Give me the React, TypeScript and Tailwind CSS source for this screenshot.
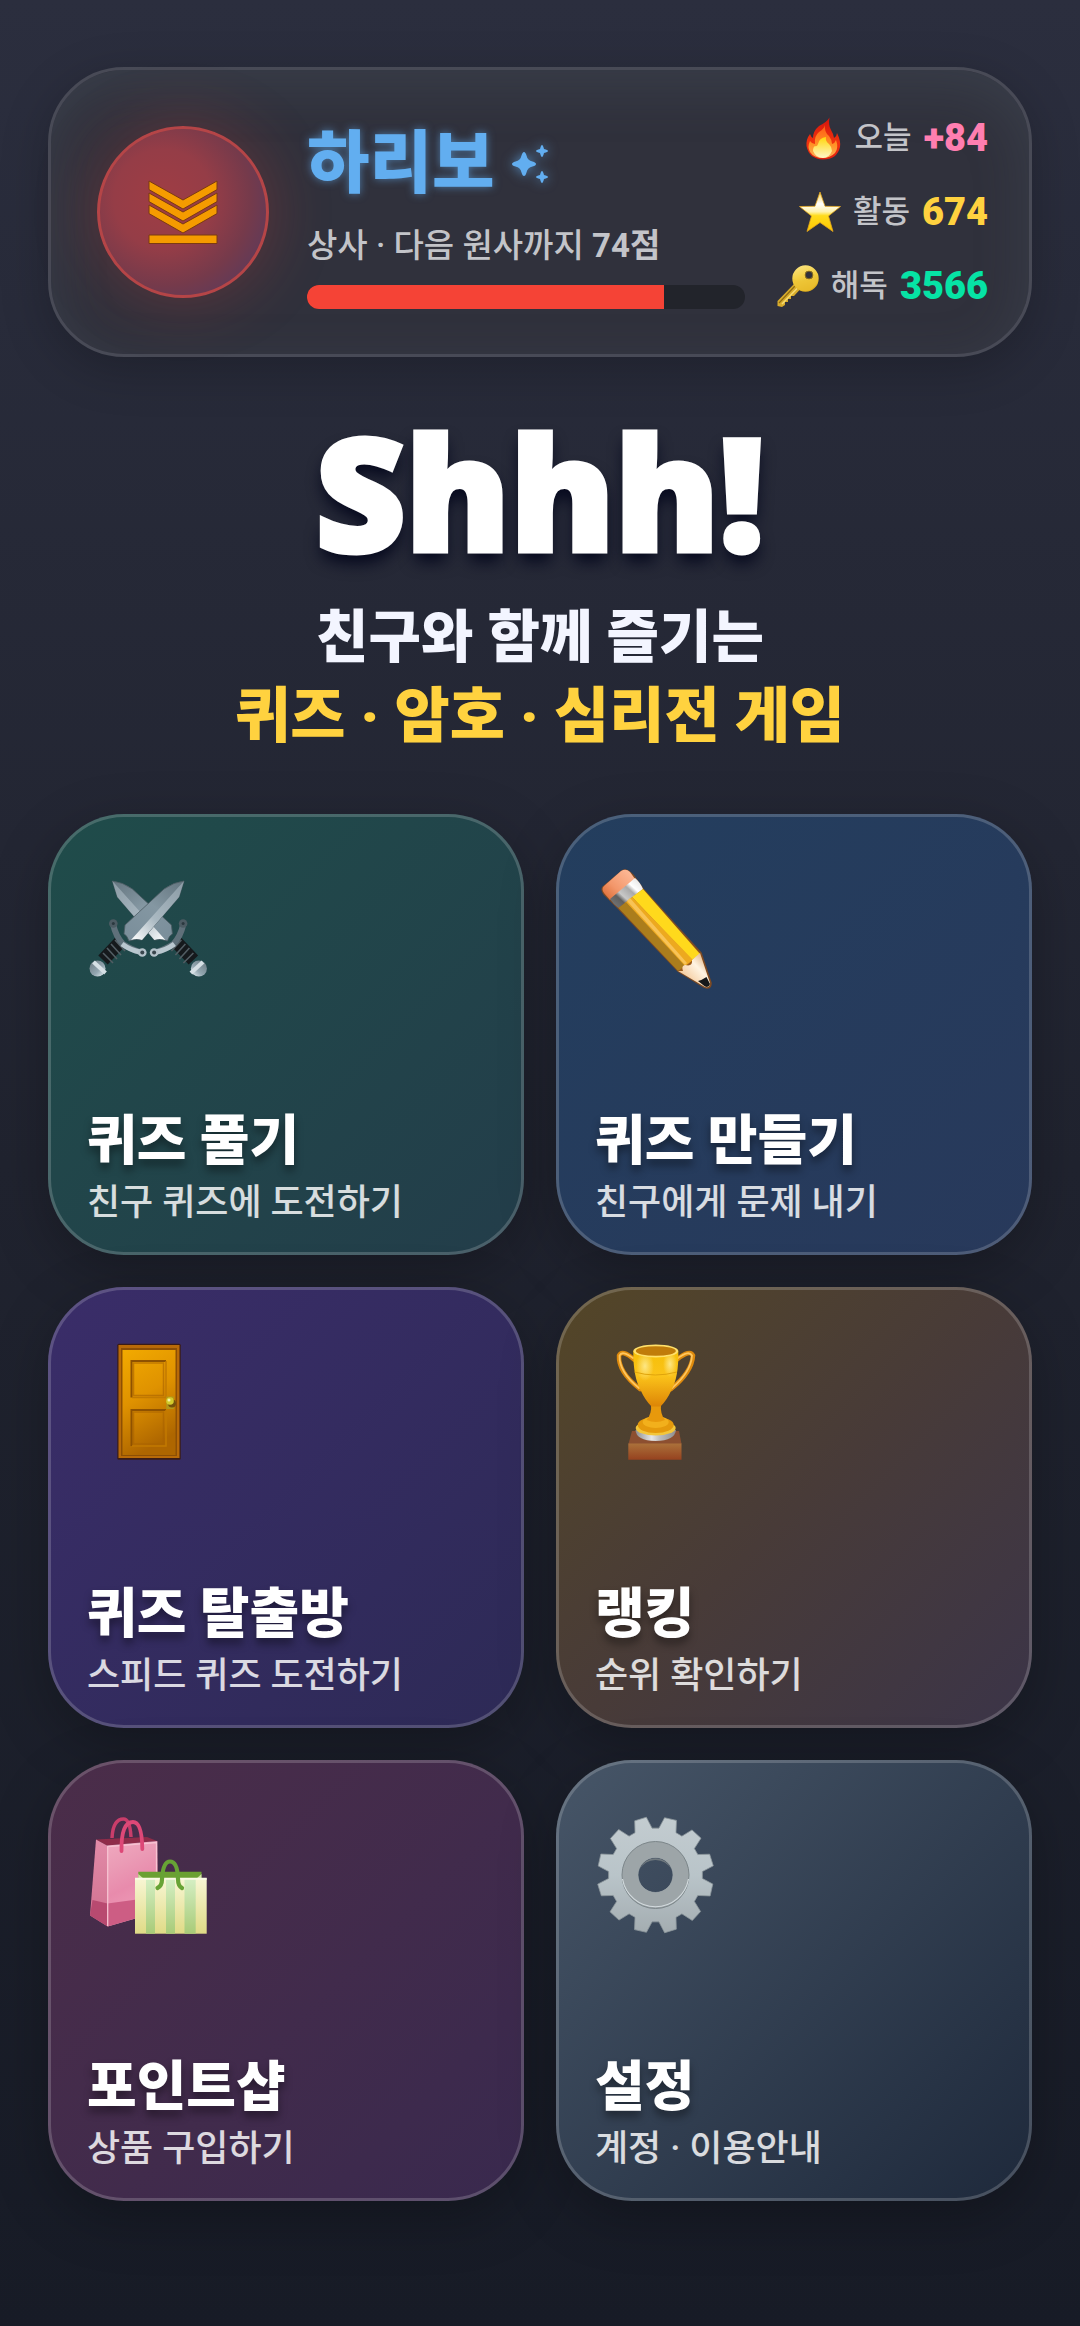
import type { ComponentType, ReactNode } from 'react'

type StatProps = {
  icon: ReactNode
  label: string
  value: string
  valueClass: string
}

type Menu = {
  title: string
  description: string
  background: string
  Icon: ComponentType
}

const RANK_SCORE = 326
const RANK_TARGET = 400

function RankBadge() {
  const bands = [0, 12, 24]

  return (
    <div className="mr-[38px] flex size-43 shrink-0 items-center justify-center rounded-full border-3 border-[#b54547] bg-[radial-gradient(circle_at_38%_42%,#9f3d44_0%,#953d47_35%,#753a4b_62%,#573a5e_88%)] shadow-[0_0_64px_rgba(244,67,54,0.26)]">
      <svg viewBox="-1 -1 70 65" className="w-[70px]" aria-hidden="true">
        <g fill="#f59b00" stroke="#7b3a12" strokeWidth="1">
          {bands.map((y) => (
            <path
              key={y}
              d={`M0 ${y}L34 ${y + 19}L68 ${y}V${y + 8.6}L34 ${y + 28}L0 ${y + 8.6}Z`}
            />
          ))}
          <path d="M0 54H68V62.5H0Z" />
        </g>
      </svg>
    </div>
  )
}

function Sparkles() {
  return (
    <svg
      viewBox="0 0 40 42"
      className="w-10 drop-shadow-[0_0_6px_rgba(98,174,240,0.7)]"
      fill="#62aef0"
      aria-hidden="true"
    >
      <path d="M13 9Q14.500 9 15.500 12.500Q16.500 17.500 21.500 18.500Q25 19.500 25 21Q25 22.500 21.500 23.500Q16.500 24.500 15.500 29.500Q14.500 33 13 33Q11.500 33 10.500 29.500Q9.500 24.500 4.500 23.500Q1 22.500 1 21Q1 19.500 4.500 18.500Q9.500 17.500 10.500 12.500Q11.500 9 13 9Z" />
      <path d="M31 2Q32 2 33 6Q37 7 37 8Q37 9 33 10Q32 14 31 14Q30 14 29 10Q25 9 25 8Q25 7 29 6Q30 2 31 2Z" />
      <path d="M31 28Q32 28 33 32Q37 33 37 34Q37 35 33 36Q32 40 31 40Q30 40 29 36Q25 35 25 34Q25 33 29 32Q30 28 31 28Z" />
    </svg>
  )
}

function FireIcon() {
  return (
    <svg viewBox="0 0 42 44" className="w-[42px]" aria-hidden="true">
      <defs>
        <linearGradient id="fire-outer" x1="0" y1="0" x2="0" y2="1">
          <stop offset="0" stopColor="#d3150c" />
          <stop offset="0.6" stopColor="#f0330f" />
          <stop offset="1" stopColor="#e0200f" />
        </linearGradient>
        <linearGradient id="fire-mid" x1="0" y1="0" x2="0" y2="1">
          <stop offset="0" stopColor="#ff5a14" />
          <stop offset="0.6" stopColor="#ff9226" />
          <stop offset="1" stopColor="#ffb057" />
        </linearGradient>
        <linearGradient id="fire-core" x1="0" y1="0" x2="0" y2="1">
          <stop offset="0" stopColor="#ffd60a" />
          <stop offset="1" stopColor="#fff6c8" />
        </linearGradient>
      </defs>
      <path
        d="M28.500 1.500Q27 9 30 14Q32.500 18 33 22Q36 20 36 17Q40 25 39 31Q36 43.500 22 43.500Q8 43 5.500 30Q5 23 9 18Q10 21 12 22Q12 15 18 10Q26 6 28.500 1.500Z"
        fill="url(#fire-outer)"
      />
      <path
        d="M24 9Q23 16 28 20Q31 24 31 28Q34 27 35 24Q38 32 34 37Q29 42 22 42Q13 42 9 36Q6 31 9 25Q11 28 14 28Q13 20 18 16Q23 13 24 9Z"
        fill="url(#fire-mid)"
      />
      <path
        d="M25 21Q24 25 28 28Q31 31 31 35Q28 42 22 42Q15 42 12 35Q12 31 14 30Q16 31 17 28Q18 22 25 21Z"
        fill="url(#fire-core)"
      />
    </svg>
  )
}

function StarIcon() {
  return (
    <svg viewBox="0 0 42 42" className="w-[42px]" aria-hidden="true">
      <defs>
        <linearGradient id="star-fill" x1="0" y1="0" x2="0" y2="1">
          <stop offset="0" stopColor="#f7d458" />
          <stop offset="0.300" stopColor="#ffffff" />
          <stop offset="0.500" stopColor="#fff3ad" />
          <stop offset="0.600" stopColor="#ffdc1c" />
          <stop offset="1" stopColor="#fdc500" />
        </linearGradient>
      </defs>
      <path
        d="M21 1L26 15.300L41.500 15.500L29.500 25L34 40.500L21 31.500L8 40.500L12.500 25L0.500 15.500L16 15.300Z"
        fill="url(#star-fill)"
        stroke="#e2a41c"
        strokeWidth="0.800"
      />
    </svg>
  )
}

function KeyIcon() {
  return (
    <svg viewBox="0 0 42 42" className="w-[42px]" aria-hidden="true">
      <defs>
        <linearGradient id="key-fill" x1="0" y1="0" x2="0.300" y2="1">
          <stop offset="0" stopColor="#fbe68a" />
          <stop offset="0.500" stopColor="#f3d044" />
          <stop offset="1" stopColor="#dfae1d" />
        </linearGradient>
      </defs>
      <path
        d="M17 19L0.500 36L0.500 41L5 42L8 40L8 37L11 37L11 34L14 34L14 31L17 31L23 24.500Z"
        fill="#d8ac2c"
      />
      <path d="M18 21L2 38" stroke="#8e6a12" strokeWidth="1.200" />
      <path d="M20.500 23L5 39" stroke="#f6dc72" strokeWidth="1.500" />
      <path
        fillRule="evenodd"
        d="M28.500 0.300A13.200 13.200 0 1 1 28.500 26.700A13.200 13.200 0 1 1 28.500 0.300ZM32 6A4 4 0 1 0 32 14A4 4 0 1 0 32 6Z"
        fill="url(#key-fill)"
      />
      <path d="M16 14Q24 19 41 12Q41 18 37 22Q31 28 23 25Q16 21 16 14Z" fill="#eec436" opacity="0.600" />
      <circle cx="32" cy="10" r="3.900" fill="#30313c" stroke="#9c7a18" strokeWidth="0.900" />
    </svg>
  )
}

function SwordShape() {
  return (
    <g>
      <path d="M34 72L16 91" stroke="#15191c" strokeWidth="13" />
      <path
        d="M28 71L38 82M24 75L34 86M20 79L30 90M16 84L26 94"
        stroke="#525d63"
        strokeWidth="1.600"
      />
      <circle cx="10.500" cy="99.500" r="8" fill="url(#sword-pommel)" />
      <path d="M6.500 93L18.500 104" stroke="#d6e0e5" strokeWidth="4" />
      <path
        d="M97 12L92 28L55 71Q48 69 42 72Q40 66 37 65L38 56L77 20Q87 13 97 12Z"
        fill="url(#sword-dark)"
        stroke="#4d5c63"
        strokeWidth="0.800"
      />
      <path d="M97 12L92 28L55 71Q50 69 44 71Z" fill="url(#sword-light)" />
      <path
        d="M26 55Q29 68 36 75Q45 81 55 83.500"
        fill="none"
        stroke="#5f707a"
        strokeWidth="6"
        strokeLinecap="round"
      />
      <path d="M35 75Q43 81 53 83" fill="none" stroke="#b9c7cf" strokeWidth="5" />
      <circle cx="26.300" cy="54.500" r="4.300" fill="#4c5b63" />
      <circle cx="26.300" cy="54.500" r="1.500" fill="#2b383f" />
      <circle cx="55.300" cy="83.500" r="4.300" fill="#b4c2ca" />
      <circle cx="55.300" cy="83.500" r="2" fill="#39464d" />
    </g>
  )
}

function SwordsIcon() {
  return (
    <svg viewBox="0 0 120 120" className="w-30 overflow-visible" aria-hidden="true">
      <defs>
        <linearGradient id="sword-dark" x1="1" y1="0" x2="0.200" y2="1">
          <stop offset="0" stopColor="#64757f" />
          <stop offset="0.500" stopColor="#8497a2" />
          <stop offset="1" stopColor="#7b8f9b" />
        </linearGradient>
        <linearGradient id="sword-light" x1="1" y1="0" x2="0" y2="1">
          <stop offset="0" stopColor="#8b9ba5" />
          <stop offset="0.600" stopColor="#a9b8c1" />
          <stop offset="1" stopColor="#ffffff" />
        </linearGradient>
        <linearGradient id="sword-pommel" x1="0" y1="0" x2="1" y2="1">
          <stop offset="0" stopColor="#68777f" />
          <stop offset="0.600" stopColor="#94a7b1" />
          <stop offset="1" stopColor="#eef5f8" />
        </linearGradient>
      </defs>
      <g transform="translate(122.400 0) scale(-1 1)">
        <SwordShape />
      </g>
      <SwordShape />
    </svg>
  )
}

function PencilIcon() {
  return (
    <svg viewBox="0 0 120 120" className="w-30 overflow-visible" aria-hidden="true">
      <defs>
        <linearGradient id="pencil-eraser" x1="0" y1="1" x2="1" y2="0">
          <stop offset="0" stopColor="#d9652c" />
          <stop offset="0.400" stopColor="#f3976b" />
          <stop offset="1" stopColor="#ffc0a0" />
        </linearGradient>
        <linearGradient id="pencil-metal" x1="0" y1="1" x2="1" y2="0">
          <stop offset="0" stopColor="#7d7d7d" />
          <stop offset="0.300" stopColor="#5f5f5f" />
          <stop offset="0.400" stopColor="#c8c8c8" />
          <stop offset="0.600" stopColor="#a9a9a9" />
          <stop offset="0.700" stopColor="#ffffff" />
          <stop offset="1" stopColor="#dcdcdc" />
        </linearGradient>
        <linearGradient id="pencil-wood" x1="0" y1="1" x2="1" y2="0">
          <stop offset="0" stopColor="#eeb070" />
          <stop offset="0.600" stopColor="#fff4e2" />
          <stop offset="1" stopColor="#d69a5c" />
        </linearGradient>
      </defs>
      <path
        d="M8 18Q6 21 9 25L23 39L83 102L109 118Q116 121 116 114L106 84L48 20L38 6Q31 -1 27 2Z"
        fill="#9a5a1c"
        stroke="#7c4a24"
        strokeWidth="1.500"
        strokeLinejoin="round"
      />
      <path d="M9 17Q6 20 9 24L15 31L40 10L35 3Q31 -1 26 2Z" fill="url(#pencil-eraser)" />
      <path d="M15 30L40 9Q45 13 48 20L23.500 39Q18 35 15 30Z" fill="url(#pencil-metal)" />
      <path d="M48 20L37 28L97 91L105 85Z" fill="#ffd91c" />
      <path d="M37 28L30 34L89 98L98 91Z" fill="#eda91f" />
      <path d="M35 29L32 32L90 96L92 94Z" fill="#f8c356" />
      <path d="M31 33L23.500 39L83 102L90 97Z" fill="#ab7d1c" />
      <path
        d="M105 84L97 91Q98 98 90 96Q86 97 88 102L83 102L110 118Q115 119 115 114Z"
        fill="url(#pencil-wood)"
      />
      <path d="M103 112Q107 111 111.500 108L115 115Q114 119 110 117.500Z" fill="#16181a" />
    </svg>
  )
}

function DoorIcon() {
  return (
    <svg viewBox="0 0 120 120" className="w-30" aria-hidden="true">
      <defs>
        <linearGradient id="door-fill" x1="0" y1="0" x2="0.300" y2="1">
          <stop offset="0" stopColor="#f2aa00" />
          <stop offset="0.500" stopColor="#df9200" />
          <stop offset="1" stopColor="#ae6600" />
        </linearGradient>
      </defs>
      <rect x="30.300" y="1.700" width="63.400" height="116" rx="1.500" fill="#3c1c14" />
      <rect x="31.500" y="3" width="61" height="113" fill="#b86a08" />
      <rect x="34" y="6" width="56" height="108" fill="#8d4f04" />
      <rect x="35.500" y="8" width="53" height="105" fill="url(#door-fill)" />
      <g fill="none" stroke="#a86200" strokeWidth="1.500">
        <path d="M44.500 55.500V19H79" stroke="#8f5200" strokeWidth="2" />
        <path d="M44.500 104V68H79" stroke="#8f5200" strokeWidth="2" />
        <rect x="46.500" y="21" width="30" height="32.500" opacity="0.600" />
        <rect x="46.500" y="70" width="30" height="32" opacity="0.600" />
        <path d="M79 19V55.500H45M79 68V104H45" stroke="#c27a00" />
      </g>
      <rect x="79.300" y="54.500" width="7.500" height="12.500" fill="#b39818" />
      <circle cx="85" cy="61.500" r="4" fill="#75510a" />
      <circle cx="83" cy="59" r="3.800" fill="#d3cb2c" />
      <circle cx="82" cy="58" r="1.500" fill="#f7f4a8" />
    </svg>
  )
}

function TrophyIcon() {
  return (
    <svg viewBox="0 0 120 120" className="w-30" aria-hidden="true">
      <defs>
        <linearGradient id="trophy-cup" x1="0" y1="0" x2="0" y2="1">
          <stop offset="0" stopColor="#f5bf08" />
          <stop offset="0.450" stopColor="#fbc31a" />
          <stop offset="1" stopColor="#dd8506" />
        </linearGradient>
        <linearGradient id="trophy-wood" x1="0" y1="0" x2="0" y2="1">
          <stop offset="0" stopColor="#ab713a" />
          <stop offset="1" stopColor="#96421f" />
        </linearGradient>
        <radialGradient id="trophy-shine">
          <stop offset="0" stopColor="#fff0a0" />
          <stop offset="1" stopColor="#fff0a0" stopOpacity="0" />
        </radialGradient>
        <linearGradient id="trophy-ring" x1="0" y1="0" x2="1" y2="0">
          <stop offset="0" stopColor="#8e8e8e" />
          <stop offset="0.400" stopColor="#e6e6e6" />
          <stop offset="0.600" stopColor="#bdbdbd" />
          <stop offset="1" stopColor="#8e8e8e" />
        </linearGradient>
      </defs>
      <path d="M37 89H84L86.500 102H33.500Z" fill="#8c4f30" />
      <path d="M33.300 101.500H86.500V117.700H33.300Z" fill="url(#trophy-wood)" />
      <path d="M40.500 88Q41 98.500 60.700 99Q80 98.500 81 88Z" fill="url(#trophy-ring)" />
      <ellipse cx="60.700" cy="86" rx="20" ry="7.500" fill="#f3c63a" />
      <ellipse cx="60.700" cy="83" rx="18" ry="8" fill="#e59a0c" />
      <ellipse cx="60.700" cy="80" rx="13" ry="6" fill="#f2b01c" />
      <path d="M56 62H66Q65 72 70 78Q61 82 51.500 78Q57 72 56 62Z" fill="#e8990c" />
      <g fill="none" strokeLinecap="round">
        <path
          d="M39 17.500Q27 7 24 13.500Q23 30 45 47M82 17.500Q95 7 98 13.500Q97 30 76 47"
          stroke="#de8a0d"
          strokeWidth="4.500"
        />
        <path
          d="M38 16Q27 8 24.500 13.500Q24 30 44 46M83 16Q94 8 97 13.500Q96 30 77 46"
          stroke="#ffc65e"
          strokeWidth="1.800"
        />
      </g>
      <path
        d="M38.300 9Q38 35 46 49Q50 58 56.500 64.500H65.500Q72 58 76 49Q84 35 83.300 9Z"
        fill="url(#trophy-cup)"
      />
      <ellipse cx="50" cy="24" rx="9" ry="15" fill="url(#trophy-shine)" opacity="0.800" />
      <ellipse cx="75" cy="22" rx="7" ry="13" fill="url(#trophy-shine)" opacity="0.800" />
      <path d="M39.500 30Q60 36 82 30" fill="none" stroke="#e0a40c" strokeWidth="1" />
      <ellipse cx="60.800" cy="9" rx="22.500" ry="6.500" fill="#ffe06a" />
      <ellipse cx="60.800" cy="9" rx="20" ry="4.800" fill="#c07c0a" />
    </svg>
  )
}

function BagsIcon() {
  return (
    <svg viewBox="0 0 120 120" className="w-30" aria-hidden="true">
      <defs>
        <linearGradient id="bag-front" x1="0" y1="0" x2="0.300" y2="1">
          <stop offset="0" stopColor="#f0a9bf" />
          <stop offset="0.300" stopColor="#eb9cb6" />
          <stop offset="0.600" stopColor="#e88bac" />
          <stop offset="1" stopColor="#ef9fba" />
        </linearGradient>
        <linearGradient id="bag-side" x1="0" y1="0" x2="0" y2="1">
          <stop offset="0" stopColor="#e28ba8" />
          <stop offset="1" stopColor="#d0708f" />
        </linearGradient>
        <linearGradient id="bag-cream" x1="0" y1="0" x2="0" y2="1">
          <stop offset="0" stopColor="#f8f6d4" />
          <stop offset="1" stopColor="#dfdb86" />
        </linearGradient>
        <linearGradient id="bag-stripe" x1="0" y1="0" x2="0" y2="1">
          <stop offset="0" stopColor="#d5efc4" />
          <stop offset="1" stopColor="#a8cb78" />
        </linearGradient>
      </defs>
      <path
        d="M25 23Q26 4 36.500 4Q43 4 44 22"
        fill="none"
        stroke="#c93d6a"
        strokeWidth="3.500"
      />
      <path d="M9 24.500L20 30.500L70 26L60 22Z" fill="#8f2c49" />
      <path d="M9 24.500L20 30.500L20.700 111.500L3 100.500Z" fill="url(#bag-side)" />
      <path d="M5.500 85L20.500 88.500L20.700 111.500L3 100.500Z" fill="#b84a70" />
      <path d="M20 30.500L70.300 26L71 97L20.700 111.500Z" fill="url(#bag-front)" />
      <path d="M20.500 88.500L50 84.500V103L20.700 111.500Z" fill="#cd5d84" />
      <path d="M20.700 111V31.500L69.500 27.500V58" fill="none" stroke="#f7c3d2" strokeWidth="1.300" />
      <path
        d="M34.500 36Q34 7 46 7Q55 7 55.300 34"
        fill="none"
        stroke="#dd4877"
        strokeWidth="3.800"
        strokeLinecap="round"
      />
      <path d="M51.300 56.700H114.500V64H51.300Z" fill="#6ba032" />
      <path d="M51.300 59L57 64H51.300ZM114.500 59L109 64H114.500Z" fill="#cfe0a4" />
      <rect x="48" y="63.300" width="71.700" height="55.400" fill="url(#bag-cream)" />
      <path
        d="M59 63.300H68V118.700H59ZM79 63.300H88V118.700H79ZM97.500 63.300H108.700V118.700H97.500Z"
        fill="url(#bag-stripe)"
      />
      <path d="M48 63.800H119.700" stroke="#fbfae6" strokeWidth="2" />
      <path
        d="M70.500 73Q75 71 75 64Q76 46.500 83 46.500Q90.500 46.500 91 64Q91 71 95 73"
        fill="none"
        stroke="#67a335"
        strokeWidth="4.200"
        strokeLinecap="round"
      />
    </svg>
  )
}

const GEAR_TEETH = 12

function gearPath() {
  const point = (radius: number, degrees: number) => {
    const angle = (degrees * Math.PI) / 180
    const x = 60.5 + radius * Math.sin(angle)
    const y = 60 - radius * Math.cos(angle)
    return `${x.toFixed(2)} ${y.toFixed(2)}`
  }

  const points: string[] = []
  for (let i = 0; i < GEAR_TEETH; i++) {
    const middle = 15 + (i * 360) / GEAR_TEETH
    points.push(
      point(47, middle - 10.8),
      point(58, middle - 6),
      point(58.5, middle + 6),
      point(47, middle + 10.8)
    )
  }
  return `M${points.join('L')}ZM60.5 42.5a17.5 17.5 0 1 0 0 35a17.5 17.5 0 1 0 0-35Z`
}

function GearIcon() {
  return (
    <svg viewBox="0 0 120 120" className="w-30" aria-hidden="true">
      <defs>
        <linearGradient id="gear-fill" x1="0" y1="0" x2="0" y2="1">
          <stop offset="0" stopColor="#c3ccd0" />
          <stop offset="0.500" stopColor="#b9c4c9" />
          <stop offset="1" stopColor="#a4adb1" />
        </linearGradient>
      </defs>
      <path
        d={gearPath()}
        fillRule="evenodd"
        fill="url(#gear-fill)"
        stroke="#8d979c"
        strokeWidth="0.800"
        strokeLinejoin="round"
      />
      <circle cx="60.500" cy="60" r="25.500" fill="none" stroke="#9da5a8" strokeWidth="16" />
      <circle cx="60.500" cy="60" r="33.500" fill="none" stroke="#7c868a" strokeWidth="1" />
      <path d="M27.500 64A33.500 33.500 0 0 0 93.500 64" fill="none" stroke="#d3dbde" strokeWidth="1.200" />
      <path d="M44 55A17.500 17.500 0 0 1 77 55Q71 45 60.500 45Q50 45 44 55Z" fill="#6f787e" />
    </svg>
  )
}

const menus: Menu[] = [
  {
    title: '퀴즈 풀기',
    description: '친구 퀴즈에 도전하기',
    background: 'from-[#1f4c4a] to-[#233d4a]',
    Icon: SwordsIcon,
  },
  {
    title: '퀴즈 만들기',
    description: '친구에게 문제 내기',
    background: 'from-[#233e5e] to-[#28395b]',
    Icon: PencilIcon,
  },
  {
    title: '퀴즈 탈출방',
    description: '스피드 퀴즈 도전하기',
    background: 'from-[#3a2d69] to-[#2d2a56]',
    Icon: DoorIcon,
  },
  {
    title: '랭킹',
    description: '순위 확인하기',
    background: 'from-[#544626] via-[#483b38] to-[#3b3448]',
    Icon: TrophyIcon,
  },
  {
    title: '포인트샵',
    description: '상품 구입하기',
    background: 'from-[#4b2d49] to-[#39294e]',
    Icon: BagsIcon,
  },
  {
    title: '설정',
    description: '계정 · 이용안내',
    background: 'from-[#475668] to-[#1e293b]',
    Icon: GearIcon,
  },
]

function Stat({ icon, label, value, valueClass }: StatProps) {
  return (
    <li className="flex h-11 items-center justify-end gap-3">
      {icon}
      <span className="text-[31px] font-medium text-[#c3c4c9]">{label}</span>
      <strong className={`text-[38px] font-black ${valueClass}`}>{value}</strong>
    </li>
  )
}

function ProfileCard() {
  const percent = (RANK_SCORE / RANK_TARGET) * 100

  return (
    <header className="flex items-center rounded-[76px] border-3 border-[#484a56] bg-[#30313c] py-[45px] pr-[41px] pl-[46px] shadow-[0_12px_48px_rgba(0,0,0,0.22),inset_0_16px_56px_rgba(90,110,125,0.22)]">
      <RankBadge />
      <div className="flex min-w-0 flex-1 flex-col gap-4 pt-1.5">
        <div className="flex items-center gap-4 text-[68px] leading-[86px] font-black text-[#62aef0]">
          <span className="[text-shadow:0_0_8px_rgba(98,174,240,0.6)]">하리보</span>
          <Sparkles />
        </div>
        <p className="text-[33px] leading-[46px] font-medium whitespace-nowrap text-[#c3c4c9]">
          상사 · 다음 원사까지 <strong className="font-bold">74점</strong>
        </p>
        <div
          role="progressbar"
          aria-label="다음 계급까지"
          aria-valuenow={RANK_SCORE}
          aria-valuemax={RANK_TARGET}
          className="h-6 overflow-hidden rounded-full bg-[#22242b]"
        >
          <div className="h-full bg-[#f54336]" style={{ width: `${percent}%` }} />
        </div>
      </div>
      <ul className="ml-8 flex shrink-0 flex-col gap-[30px]">
        <Stat icon={<FireIcon />} label="오늘" value="+84" valueClass="text-[#ff7eb0]" />
        <Stat icon={<StarIcon />} label="활동" value="674" valueClass="text-[#ffd23f]" />
        <Stat icon={<KeyIcon />} label="해독" value="3566" valueClass="text-[#06e3a5]" />
      </ul>
    </header>
  )
}

function MenuCard({ title, description, background, Icon }: Menu) {
  return (
    <button
      type="button"
      className={`flex h-[441px] flex-col items-start justify-between rounded-[76px] border-3 border-white/18 bg-linear-135 bg-origin-border px-9 pt-[52px] pb-[19px] text-left shadow-[0_16px_56px_rgba(0,0,0,0.26)] ${background}`}
    >
      <Icon />
      <span className="flex flex-col">
        <span className="text-[54px] leading-[62px] font-black [text-shadow:0_6px_8px_rgba(0,0,0,0.4)]">
          {title}
        </span>
        <span className="text-[36px] leading-[60px] font-medium text-white/82">{description}</span>
      </span>
    </button>
  )
}

export default function App() {
  return (
    <main className="min-h-screen bg-linear-to-b from-[#2b2e3e] via-[#20232f] to-[#171b26] px-12 pt-[67px] pb-[126px] font-['Roboto','Noto_Sans_CJK_KR',sans-serif] text-white">
      <ProfileCard />
      <section className="pt-[54px] text-center">
        <h1 className="font-['Noto_Sans','Open_Sans',sans-serif] text-[156px] leading-[160px] font-black [-webkit-text-stroke:5px_white] [text-shadow:0_10px_16px_#04071c]">
          Shhh!
        </h1>
        <p className="mt-[28px] text-[57px] leading-[78px] font-black text-[#f3f5ff]">
          친구와 함께 즐기는
        </p>
        <p className="text-[60px] leading-[80px] font-black text-[#ffd23f]">
          퀴즈 · 암호 · 심리전 게임
        </p>
      </section>
      <nav className="mt-[57px] grid grid-cols-2 gap-8">
        {menus.map((menu) => (
          <MenuCard key={menu.title} {...menu} />
        ))}
      </nav>
    </main>
  )
}
